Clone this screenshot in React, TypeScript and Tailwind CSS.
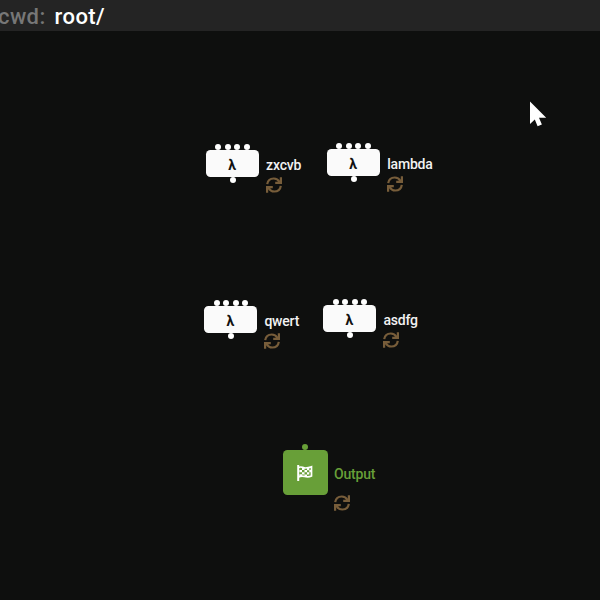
import React from "react";

function Cycle() {
  return (
    <svg viewBox="0 0 16 16" className="h-4 w-4" fill="none" stroke="#775d3a" strokeWidth="2.2">
      <path d="M1.2 7.2C1.7 3.6 4.5 1.5 7.8 1.5c2.6 0 4.4 1.2 5.8 3.6" />
      <path d="M9.2 5.9h5.7V0.3" />
      <path d="M14.8 8.8c-.5 3.6-3.3 5.7-6.6 5.7-2.6 0-4.4-1.2-5.8-3.6" />
      <path d="M6.8 10.1H1.1v5.6" />
    </svg>
  );
}

function Pointer() {
  return (
    <svg viewBox="0 0 18 27" className="absolute left-[530px] top-[101px] h-[27px] w-[18px]">
      <path d="M0 .5v22.4l4.8-4.3 2.8 6.6 4.3-1.6-2.9-6.9h7.2z" fill="#fff" />
    </svg>
  );
}

function CheckeredFlag() {
  return (
    <svg viewBox="0 0 16 16" className="h-4 w-4" fill="none" stroke="#fff">
      <path d="M1.2 0v16" strokeWidth="2" />
      <path d="M1.5 2.5c3-1.5 4 .5 7 .5 2.5 0 4-.5 6-1.2v9.2c-3 1.5-5 1-7 .5-2.5-.6-4-.5-6 .5" strokeWidth="1.7" />
      <path
        fill="#fff"
        stroke="none"
        d="M5 2.5h2.5v2.5H5zM10 2.7h2.3v2.5H10zM2.4 5h2.6v2.2H2.4zM7.5 5h2.5v2.3H7.5zM12.3 5h2v2.2h-2zM5 7.2h2.5v2.3H5zM10 7.3h2.3v2.3H10zM2.4 9.3h2.6v2H2.4zM7.5 9.5h2.5v2H7.5z"
      />
    </svg>
  );
}

type LambdaProps = { x: number; y: number; name: string };

function LambdaNode({ x, y, name }: LambdaProps) {
  return (
    <div className="absolute flex gap-[7px]" style={{ left: x, top: y }}>
      <div className="flex w-[53px] flex-col items-center">
        <div className="mb-[0.5px] flex h-[6px] gap-[3.6px]">
          {[0, 1, 2, 3].map((i) => (
            <i key={i} className="h-[6px] w-[6px] rounded-full bg-white" />
          ))}
        </div>
        <div className="flex h-[27px] w-full items-center justify-center rounded-[4.5px] bg-[#fafafa] pt-[2px] pr-px text-[14px] leading-none font-bold text-[#111]">
          λ
        </div>
        <i className="h-[6px] w-[6px] rounded-full bg-white" />
      </div>
      <div className="flex flex-col gap-[2.5px] pt-[11px]">
        <span className="text-[14px] leading-5 font-medium tracking-[-0.2px] text-[#f2f2f2]">{name}</span>
        <Cycle />
      </div>
    </div>
  );
}

const nodes: LambdaProps[] = [
  { x: 206.1, y: 143.8, name: "zxcvb" },
  { x: 327.2, y: 142.5, name: "lambda" },
  { x: 204.4, y: 299.6, name: "qwert" },
  { x: 323.4, y: 298.6, name: "asdfg" },
];

export default function App() {
  return (
    <div className="relative flex h-[600px] w-[600px] flex-col overflow-hidden bg-[#0e0f0e] font-['Roboto','Liberation_Sans',sans-serif]">
      <header className="flex h-[31px] shrink-0 items-center gap-[9px] bg-[#242424] pt-[2px] text-[22px] leading-none font-medium tracking-[0.4px]">
        <span className="-ml-[2px] text-[#777]">cwd:</span>
        <span className="text-white">root/</span>
      </header>
      <main className="flex-1">
        {nodes.map((n) => (
          <LambdaNode key={n.name} {...n} />
        ))}
        <div className="absolute left-[283px] top-[443.9px] flex gap-[6.5px]">
          <div className="flex w-[44.5px] flex-col items-center gap-[0.5px]">
            <i className="h-[6px] w-[6px] rounded-full bg-[#689f38]" />
            <div className="flex h-[44.5px] w-full items-center justify-center rounded-[4.5px] bg-[#689f38]">
              <CheckeredFlag />
            </div>
          </div>
          <div className="flex flex-col gap-[11px] pt-5">
            <span className="text-[14px] leading-5 font-medium tracking-[-0.2px] text-[#689f38]">Output</span>
            <Cycle />
          </div>
        </div>
        <Pointer />
      </main>
    </div>
  );
}
